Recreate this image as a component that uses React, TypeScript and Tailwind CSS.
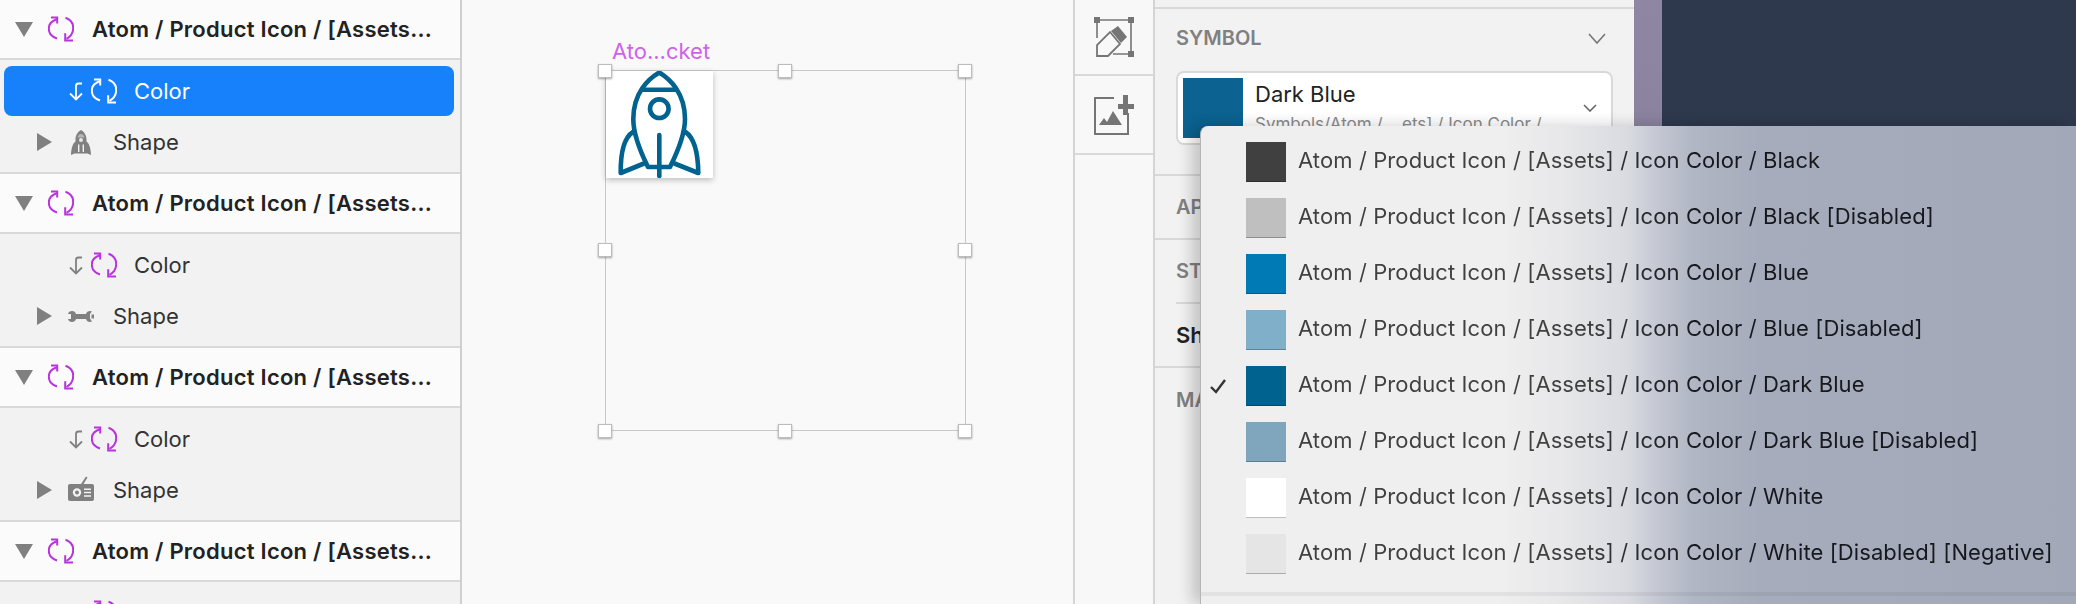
import type { ReactNode } from "react";

const font = { fontFamily: "Inter, 'Noto Sans', sans-serif" };

const options = [
  { name: "Black", color: "bg-[#404040]" },
  { name: "Black [Disabled]", color: "bg-[#bfbfbf]" },
  { name: "Blue", color: "bg-[#007ab5]" },
  { name: "Blue [Disabled]", color: "bg-[#7fafc9]" },
  { name: "Dark Blue", color: "bg-[#00628f]", checked: true },
  { name: "Dark Blue [Disabled]", color: "bg-[#7fa6bc]" },
  { name: "White", color: "bg-white" },
  { name: "White [Disabled] [Negative]", color: "bg-[#e5e5e5]" },
];

const SyncIcon = ({ className }: { className: string }) => (
  <svg viewBox="0 0 26 26" fill="none" stroke="currentColor" strokeWidth="2" className={className}>
    <path d="M9 22.5C3 20.5 0.8 16.5 0.8 12.5C0.8 8.5 3.5 5 8.8 3.2" />
    <path d="M3 1.5H9.2V7.5" />
    <path d="M17.5 1.8C22.5 3.5 25.2 7.5 25.2 12C25.2 16.5 23 20.5 18.5 22.8" />
    <path d="M17.2 17.2V24.5H25" />
  </svg>
);

const OverrideArrow = ({ className }: { className: string }) => (
  <svg viewBox="0 0 14 19" fill="none" stroke="currentColor" strokeWidth="1.8" className={className}>
    <path d="M13 1.5H9.5C8 1.5 7 2.5 7 4V17.5" />
    <path d="M1 11.5L7 17.5L13 11.5" />
  </svg>
);

const TriangleDown = () => (
  <svg viewBox="0 0 18 15" className="h-[15px] w-[18px] fill-[#808080]">
    <path d="M0 0H18L9 15Z" />
  </svg>
);

const TriangleRight = () => (
  <svg viewBox="0 0 15 18" className="h-[18px] w-[15px] fill-[#808080]">
    <path d="M0 0L15 9L0 18Z" />
  </svg>
);

const RocketGlyph = () => (
  <svg viewBox="0 0 20 25" className="h-[25px] w-5 fill-[#808080]">
    <path d="M10 0C13 1.5 15.5 5 15.5 9.5L15.5 11.5C18 13 19.8 18 20 25L16.5 23.5L3.5 23.5L0 25C0.2 18 2 13 4.5 11.5L4.5 9.5C4.5 5 7 1.5 10 0Z" />
    <path d="M6.5 7.5C7 5 8.5 4 10 4C11.5 4 13 5 13.5 7.5Z" fill="#b5b5b5" />
    <circle cx="10" cy="10" r="2" fill="#e6e6e6" />
    <path d="M7 14.5H8.4V22H7ZM11.6 14.5H13V22H11.6Z" fill="#f2f2f2" />
  </svg>
);

const WrenchGlyph = () => (
  <svg viewBox="0 0 26 11" className="h-[11px] w-[26px] fill-[#808080]">
    <path d="M0 3C0.5 1 2 0 4 0C6 0 7.5 1.2 8 3H18C18.5 1.2 20 0 22 0L24 0.5L22 3V7.5L24 10.5L22 11C20 11 18.5 9.8 18 8H8C7.5 9.8 6 11 4 11C2 11 0.5 10 0 8H3V3Z" />
    <path d="M23.5 3.5H26V7.5H23.5Z" />
  </svg>
);

const RadioGlyph = () => (
  <svg viewBox="0 0 26 26" className="-mt-0.5 h-[26px] w-[26px] fill-[#808080]">
    <path d="M2 8H13L18 0.5L19.5 1.5L15.5 8H24C25.2 8 26 8.8 26 10V23C26 24.2 25.2 25 24 25H2C0.8 25 0 24.2 0 23V10C0 8.8 0.8 8 2 8Z" />
    <circle cx="9" cy="16.5" r="4.2" fill="#f2f2f2" />
    <circle cx="9" cy="16.5" r="2" />
    <path d="M16 12.5H23V14H16ZM16 15.8H23V17.3H16ZM16 19.2H23V20.7H16Z" fill="#f2f2f2" />
  </svg>
);

const Group = ({ icon, selected, partial }: { icon?: ReactNode; selected?: boolean; partial?: boolean }) => (
  <div className="shrink-0">
    <div className="flex h-[60px] items-center border-b-2 border-[#d9d9d9] bg-[#fbfbfb]">
      <div className="ml-[15px] w-[33px]">
        <TriangleDown />
      </div>
      <SyncIcon className="h-[26px] w-[26px] text-[#b833dd]" />
      <span className="ml-[18px] text-[22px] font-semibold tracking-[0.25px] text-[#222]">Atom / Product Icon / [Assets...</span>
    </div>
    <div className="h-[114px] border-b-2 border-[#d9d9d9] bg-[#f2f2f2] pl-1 pr-1.5 pt-1.5">
      <div
        className={`flex h-[50px] items-center rounded-lg pl-[65px] ${selected ? "bg-[#1780fb] text-white" : "text-[#333]"}`}
      >
        <OverrideArrow className={`h-[19px] w-3.5 ${selected ? "text-white" : "text-[#808080]"}`} />
        <SyncIcon className={`ml-2 h-[26px] w-[26px] ${selected ? "text-white" : "text-[#b833dd]"}`} />
        {!partial && <span className="ml-[17px] text-[22px]">Color</span>}
      </div>
      {!partial && (
        <div className="flex h-[52px] items-center">
          <div className="ml-[33px] w-[31px]">
            <TriangleRight />
          </div>
          <div className="flex w-[26px] justify-center">{icon}</div>
          <span className="ml-[19px] text-[22px] text-[#333]">Shape</span>
        </div>
      )}
    </div>
  </div>
);

const Handle = ({ className }: { className: string }) => (
  <div className={`absolute h-[14px] w-[14px] border border-[#bdbdbd] bg-white shadow-[0_1px_2px_rgba(0,0,0,0.35)] ${className}`} />
);

const Rocket = () => (
  <svg viewBox="0 0 107 107" fill="none" stroke="#00628f" strokeWidth="4.6" strokeLinecap="round" strokeLinejoin="round" className="h-full w-full">
    <path d="M53.3 1.5C64 8 79 22 79 48C79 63 72 80 64 96H42C34 80 27.3 63 27.3 48C27.3 22 42 8 53.3 1.5Z" />
    <path d="M36 18.7H70" />
    <circle cx="53.3" cy="37.7" r="9.3" />
    <path d="M53.3 64V105" />
    <path d="M27 61C19 66 14.5 80 14.7 102L38 92.5" />
    <path d="M79.5 61C87 66 92 80 92.3 102L68.5 92.5" />
  </svg>
);

const PanelSection = ({ children, className }: { children: ReactNode; className: string }) => (
  <div className={`flex items-center pl-[21px] text-[20px] ${className}`}>{children}</div>
);

export default function App() {
  return (
    <div className="relative flex h-[604px] w-[2076px] overflow-hidden bg-[#f9f9f9]" style={font}>
      {/* layers */}
      <aside className="flex h-full w-[462px] shrink-0 flex-col overflow-hidden border-r-2 border-[#cfcfcf] bg-[#f2f2f2]">
        <Group icon={<RocketGlyph />} selected />
        <Group icon={<WrenchGlyph />} />
        <Group icon={<RadioGlyph />} />
        <Group partial />
      </aside>

      {/* canvas */}
      <main className="relative w-[611px] shrink-0 bg-[#f9f9f9]">
        <span className="absolute left-[150px] top-[39px] text-[22px] leading-6 text-[#cf62ea]">Ato...cket</span>
        <div className="absolute left-[143px] top-[70px] h-[361px] w-[361px] border border-[#c8c8c8]" />
        <div className="absolute left-[144px] top-[71px] h-[107px] w-[107px] bg-white shadow-[0_2px_6px_rgba(0,0,0,0.25)]">
          <Rocket />
        </div>
        <Handle className="left-[136px] top-[64px]" />
        <Handle className="left-[316px] top-[64px]" />
        <Handle className="left-[496px] top-[64px]" />
        <Handle className="left-[136px] top-[243px]" />
        <Handle className="left-[496px] top-[243px]" />
        <Handle className="left-[136px] top-[424px]" />
        <Handle className="left-[316px] top-[424px]" />
        <Handle className="left-[496px] top-[424px]" />
      </main>

      {/* tool column */}
      <div className="flex h-full w-[82px] shrink-0 flex-col border-x-2 border-[#d4d4d4] bg-[#f8f8f8]">
        <div className="flex h-[76px] items-center justify-center border-b-2 border-[#d9d9d9]">
          <svg viewBox="0 0 40 40" className="h-10 w-10">
            <g fill="#757575">
              <rect x="0" y="0" width="6" height="6" />
              <rect x="34" y="0" width="6" height="6" />
              <rect x="34" y="34" width="6" height="6" />
            </g>
            <path d="M3 6V21M37 6V34M6 3H34M19 37H34" stroke="#757575" strokeWidth="1.6" fill="none" />
            <path d="M24 9L33 20L27 26L17 14Z" fill="#757575" />
            <path d="M16 15L26 27L14 39H3V28Z" fill="none" stroke="#757575" strokeWidth="1.8" />
          </svg>
        </div>
        <div className="flex h-[79px] items-center justify-center border-b-2 border-[#d9d9d9]">
          <svg viewBox="0 0 40 40" className="h-10 w-10">
            <path d="M20 3H1V39H34V18" stroke="#757575" strokeWidth="2" fill="none" />
            <path d="M29 0H34V9H40V14H34V20H29V14H24V9H29Z" fill="#757575" />
            <path d="M5 30L10 23L13 27L19 16L28 30Z" fill="#757575" />
          </svg>
        </div>
      </div>

      {/* inspector */}
      <section className="h-full w-[479px] shrink-0 bg-[#f2f2f2]">
        <div className="h-[9px] border-b-2 border-[#d9d9d9]" />
        <div className="h-[167px] border-b-2 border-[#d9d9d9]">
          <div className="flex h-[58px] items-center justify-between pl-[21px] pr-[28px]">
            <span className="text-[20px] font-semibold text-[#808080]">SYMBOL</span>
            <svg viewBox="0 0 18 11" fill="none" stroke="#777" strokeWidth="1.6" className="h-[11px] w-[18px]">
              <path d="M1 1L9 10L17 1" />
            </svg>
          </div>
          <div className="ml-[21px] mt-1 flex h-[74px] w-[437px] items-center overflow-hidden rounded-lg border-2 border-[#d9d9d9] bg-white pl-[5px]">
            <div className="h-[60px] w-[60px] shrink-0 bg-[#0c6290]" />
            <div className="ml-3 flex-1 leading-none">
              <div className="text-[22px] leading-6 text-[#222]">Dark Blue</div>
              <div className="mt-2 text-[17px] leading-5 text-[#8a8a8a]">Symbols/Atom / …ets] / Icon Color /</div>
            </div>
            <svg viewBox="0 0 14 8" fill="none" stroke="#666" strokeWidth="1.6" className="mr-[14px] h-2 w-3.5">
              <path d="M1 1L7 7L13 1" />
            </svg>
          </div>
        </div>
        <PanelSection className="h-[64px] border-b-2 border-[#d9d9d9] font-semibold text-[#808080]">AP</PanelSection>
        <PanelSection className="ml-[21px] h-[64px] border-b-2 border-[#d9d9d9] !pl-0 font-semibold text-[#808080]">ST</PanelSection>
        <PanelSection className="h-[64px] border-b-2 border-[#d9d9d9] !text-[22px] font-semibold text-[#222]">Sh</PanelSection>
        <PanelSection className="h-[64px] font-semibold text-[#808080]">MA</PanelSection>
      </section>

      <div className="h-full w-[28px] shrink-0 bg-gradient-to-b from-[#8f86a3] to-[#7c778c]" />
      <div className="h-full flex-1 bg-[#2e394d]" />

      {/* symbol override menu */}
      <div className="absolute left-[1200px] top-[126px] h-[478px] w-[876px] rounded-tl-lg border-l border-[#b5b5b5] bg-[linear-gradient(90deg,#efefef_0%,#efefef_34%,#e8e8ea_41%,#d9dbe1_48.7%,#c2c6d1_52.5%,#b1b6c4_56.3%,#a6acbb_64%,#a2a8b7_100%)] pt-2 shadow-[-8px_0_16px_rgba(0,0,0,0.2)]">
        {options.map((o) => (
          <div key={o.name} className="flex h-14 items-center">
            <div className="flex w-[45px] justify-start pl-[9px]">
              {o.checked && (
                <svg viewBox="0 0 16 15" fill="none" stroke="#333" strokeWidth="2.4" className="h-[15px] w-4">
                  <path d="M1 8L6 13L15 1" />
                </svg>
              )}
            </div>
            <div className={`h-10 w-10 shrink-0 border-b border-black/25 ${o.color}`} />
            <span className="ml-3 -mt-1 bg-[linear-gradient(90deg,#404040_280px,#16181e_400px)] bg-[length:800px_100%] bg-no-repeat bg-clip-text text-[22px] tracking-[0.1px] text-transparent">
              Atom / Product Icon / [Assets] / Icon Color / {o.name}
            </span>
          </div>
        ))}
        <div className="mt-[10px] h-1 bg-black/5" />
      </div>
    </div>
  );
}
